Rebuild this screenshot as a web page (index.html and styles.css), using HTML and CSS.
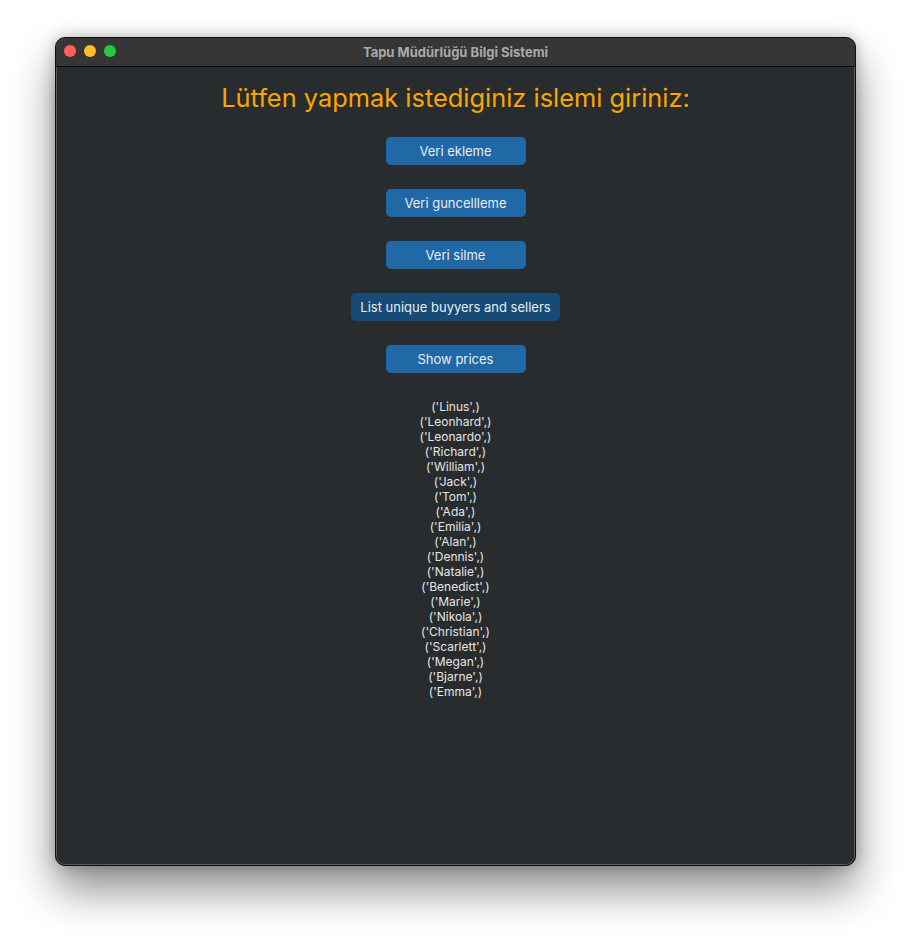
FILE: index.html
```html
<!DOCTYPE html>
<html lang="tr">
<head>
<meta charset="utf-8">
<title>Tapu Müdürlüğü Bilgi Sistemi</title>
<link rel="stylesheet" href="styles.css">
</head>
<body>
<div class="window">
  <div class="titlebar">
    <div class="lights">
      <span class="light red"></span>
      <span class="light yellow"></span>
      <span class="light green"></span>
    </div>
    <div class="title">Tapu Müdürlüğü Bilgi Sistemi</div>
  </div>
  <div class="content">
    <h1 class="heading">Lütfen yapmak istediginiz islemi giriniz:</h1>
    <div class="buttons">
      <button class="btn">Veri ekleme</button>
      <button class="btn">Veri guncellleme</button>
      <button class="btn">Veri silme</button>
      <button class="btn btn-active">List unique buyyers and sellers</button>
      <button class="btn">Show prices</button>
    </div>
    <div class="results">
      <div>('Linus',)</div>
      <div>('Leonhard',)</div>
      <div>('Leonardo',)</div>
      <div>('Richard',)</div>
      <div>('William',)</div>
      <div>('Jack',)</div>
      <div>('Tom',)</div>
      <div>('Ada',)</div>
      <div>('Emilia',)</div>
      <div>('Alan',)</div>
      <div>('Dennis',)</div>
      <div>('Natalie',)</div>
      <div>('Benedict',)</div>
      <div>('Marie',)</div>
      <div>('Nikola',)</div>
      <div>('Christian',)</div>
      <div>('Scarlett',)</div>
      <div>('Megan',)</div>
      <div>('Bjarne',)</div>
      <div>('Emma',)</div>
    </div>
  </div>
</div>
</body>
</html>
```

FILE: styles.css
```css
html, body {
  margin: 0;
  padding: 0;
  background: #ffffff;
}
body {
  width: 912px;
  height: 940px;
  overflow: hidden;
  font-family: Inter, "Noto Sans", "DejaVu Sans", sans-serif;
}
.window {
  margin: 37px 0 0 55px;
  width: 801px;
  height: 829px;
  box-sizing: border-box;
  border: 1px solid #0e0e0e;
  border-radius: 10px;
  background: #292c2e;
  box-shadow: inset 0 0 0 1px rgba(255,255,255,0.22), 0 24px 44px rgba(0,0,0,0.45), 0 0 14px rgba(0,0,0,0.25);
  overflow: hidden;
  display: flex;
  flex-direction: column;
}
.titlebar {
  height: 28px;
  flex: none;
  background: #363636;
  border-bottom: 1px solid #0c0c0c;
  position: relative;
  display: flex;
  align-items: center;
  justify-content: center;
}
.lights {
  position: absolute;
  left: 8px;
  top: 7px;
  display: flex;
  gap: 8px;
}
.light {
  width: 12px;
  height: 12px;
  border-radius: 50%;
  display: block;
}
.red { background: #fe5f57; }
.yellow { background: #febc2e; }
.green { background: #28c840; }
.title {
  font-size: 13px;
  font-weight: 700;
  color: #a9a9a9;
}
.content {
  flex: 1;
  display: flex;
  flex-direction: column;
  align-items: center;
  padding-top: 15px;
}
.heading {
  margin: 0;
  font-size: 25.4px;
  line-height: 32px;
  font-weight: 400;
  color: #f9a602;
}
.buttons {
  margin-top: 23px;
  display: flex;
  flex-direction: column;
  align-items: center;
  gap: 24px;
}
.btn {
  min-width: 140px;
  height: 28px;
  padding: 0 9px;
  border: none;
  border-radius: 5px;
  background: #2068a6;
  color: #e8eef4;
  font-family: inherit;
  font-size: 13px;
}
.btn-active {
  background: #174a75;
}
.results {
  margin-top: 26px;
  font-size: 12px;
  line-height: 15px;
  color: #e6e6e6;
  text-align: center;
}
```
